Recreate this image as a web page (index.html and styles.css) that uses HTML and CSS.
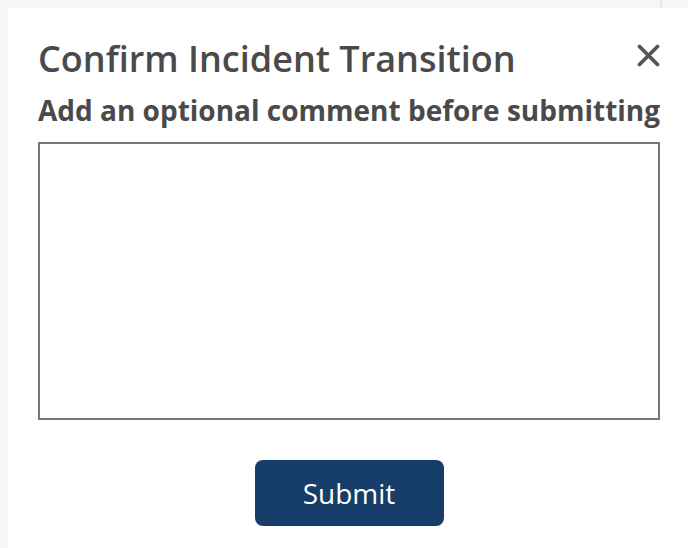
FILE: index.html
```html
<!DOCTYPE html>
<html lang="en">
<head>
    <meta charset="UTF-8">
    <meta name="viewport" content="width=device-width, initial-scale=1.0">
    <title>Confirm Incident Transition</title>
    <link rel="stylesheet" href="styles.css">
</head>
<body>
    <div class="backdrop-edge"></div>
    <div class="modal">
        <div class="modal-header">
            <h2 class="modal-title">Confirm Incident Transition</h2>
            <button type="button" class="close-btn" aria-label="Close">
                <svg width="23" height="23" viewBox="0 0 23 23">
                    <path d="M2.5 2.5 L20.5 20.5 M20.5 2.5 L2.5 20.5" stroke="#555" stroke-width="3.8" stroke-linecap="round"/>
                </svg>
            </button>
        </div>
        <form id="transitionForm">
            <label for="comment" class="comment-label">Add an optional comment before submitting</label>
            <textarea id="comment" name="comment" class="comment-box"></textarea>
            <div class="actions">
                <button type="submit" class="submit-btn">Submit</button>
            </div>
        </form>
    </div>
</body>
</html>
```

FILE: styles.css
```css
body {
    font-family: "Open Sans", Arial, sans-serif;
    background-color: #f6f6f6;
    margin: 0;
    padding: 8px 0 0 8px;
    overflow: hidden;
    position: relative;
}
.backdrop-edge {
    position: absolute;
    top: 0;
    left: 660px;
    width: 2px;
    height: 8px;
    background-color: #e6e6e6;
}
.modal {
    background-color: #fff;
    width: 622px;
    padding: 26px 30px 40px 30px;
    min-height: 560px;
}
.modal-header {
    display: flex;
    justify-content: space-between;
    align-items: flex-start;
}
.modal-title {
    margin: 0;
    font-size: 36px;
    font-weight: 600;
    color: #4a4a4a;
    white-space: nowrap;
}
.close-btn {
    background: none;
    border: none;
    padding: 0;
    width: 23px;
    height: 23px;
    margin-top: 10px;
    cursor: pointer;
}
.comment-label {
    display: block;
    margin-top: 8px;
    font-size: 28px;
    font-weight: 700;
    color: #4a4a4a;
    white-space: nowrap;
}
.comment-box {
    display: block;
    box-sizing: border-box;
    width: 100%;
    height: 278px;
    margin-top: 13px;
    border: 2px solid #777;
    border-radius: 0;
    resize: none;
    font-family: inherit;
}
.actions {
    display: flex;
    justify-content: center;
    margin-top: 40px;
}
.submit-btn {
    background-color: #173d6a;
    color: #fff;
    font-family: inherit;
    font-size: 28px;
    padding: 13px 48px;
    border: none;
    border-radius: 8px;
    cursor: pointer;
    width: 189px;
    height: 66px;
}
```
